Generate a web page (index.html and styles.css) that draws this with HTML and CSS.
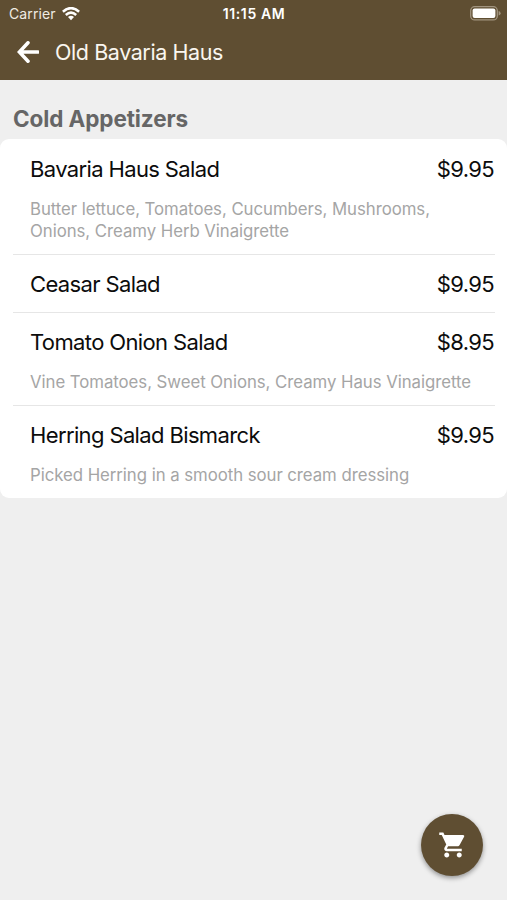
FILE: index.html
```html
<!DOCTYPE html>
<html lang="en">
<head>
<meta charset="utf-8">
<title>Old Bavaria Haus</title>
<link rel="stylesheet" href="styles.css">
</head>
<body>
<header class="header">
  <div class="status">
    <div class="carrier"><span>Carrier</span>
      <svg class="wifi" width="18" height="14" viewBox="0 0 18 14"><g fill="none" stroke="#fff" stroke-width="2.5"><path d="M.9 4.7Q9-2.5 17.1 4.7"/><path d="M3.8 8Q9 3.3 14.2 8"/></g><path fill="#fff" d="M6 10.1Q9 7.5 12 10.1L9 13.2Z"/></svg>
    </div>
    <time class="time">11:15 AM</time>
    <svg class="battery" width="31" height="15" viewBox="0 0 31 15"><rect x=".7" y=".7" width="26.6" height="13.2" rx="4" fill="none" stroke="#a1947f" stroke-width="1.3"/><rect x="2.6" y="2.6" width="22.8" height="9.4" rx="2" fill="#fff"/><path d="M28.6 5Q30.6 5.6 30.6 7.3T28.6 9.6Z" fill="#a1947f"/></svg>
  </div>
  <nav class="nav">
    <svg class="back" width="22" height="22" viewBox="0 0 22 22"><path d="M11 1.8 2.4 11l8.6 9.2M2.8 11H21" fill="none" stroke="#fff" stroke-width="3.5" stroke-linecap="round"/></svg>
    <h1 class="title">Old Bavaria Haus</h1>
  </nav>
</header>
<main class="menu">
  <h2 class="section">Cold Appetizers</h2>
  <ul class="card">
    <li class="item">
      <div class="line"><span class="name">Bavaria Haus Salad</span><span class="price">$9.95</span></div>
      <p class="desc">Butter lettuce, Tomatoes, Cucumbers, Mushrooms,<br>Onions, Creamy Herb Vinaigrette</p>
    </li>
    <li class="item plain">
      <div class="line"><span class="name">Ceasar Salad</span><span class="price">$9.95</span></div>
    </li>
    <li class="item">
      <div class="line"><span class="name">Tomato Onion Salad</span><span class="price">$8.95</span></div>
      <p class="desc">Vine Tomatoes, Sweet Onions, Creamy Haus Vinaigrette</p>
    </li>
    <li class="item">
      <div class="line"><span class="name">Herring Salad Bismarck</span><span class="price">$9.95</span></div>
      <p class="desc">Picked Herring in a smooth sour cream dressing</p>
    </li>
  </ul>
</main>
<button class="cart" aria-label="Cart">
  <svg width="30" height="30" viewBox="0 0 24 24" fill="#fff"><path d="M7 18c-1.1 0-1.99.9-1.99 2S5.9 22 7 22s2-.9 2-2-.9-2-2-2zM1 2v2h2l3.6 7.59-1.35 2.45c-.16.28-.25.61-.25.96 0 1.1.9 2 2 2h12v-2H7.42c-.14 0-.25-.11-.25-.25l.03-.12.9-1.63h7.45c.75 0 1.41-.41 1.75-1.03l3.58-6.49A1 1 0 0 0 20 4H5.21l-.94-2H1zm16 16c-1.1 0-1.99.9-1.99 2s.89 2 1.99 2 2-.9 2-2-.9-2-2-2z"/></svg>
</button>
</body>
</html>
```
FILE: styles.css
```css
* { box-sizing: border-box; margin: 0; padding: 0; }
body {
  min-height: 900px;
  background: #efefef;
  font-family: Inter, "Liberation Sans", sans-serif;
  color: #0c0c0c;
}
.header { height: 80px; background: #5f4e32; color: #fff; }
.status {
  display: grid;
  grid-template-columns: 1fr auto 1fr;
  align-items: center;
  height: 27px;
  padding: 0 6px 0 9px;
  font-size: 14px;
  line-height: 18px;
}
.carrier { display: flex; align-items: center; gap: 6px; letter-spacing: 0.1px; color: #f0ebe3; }
.time { margin-left: -2px; font-weight: 600; font-size: 14px; letter-spacing: 0.6px; }
.battery { justify-self: end; }
.nav { display: flex; align-items: center; height: 50px; padding-left: 17px; gap: 16px; }
.title { font-size: 21.5px; font-weight: 400; letter-spacing: -0.42px; line-height: 28px; color: #faf6ef; }
.section {
  height: 59px;
  padding: 25px 13px 0;
  font-size: 22.5px;
  font-weight: 700;
  line-height: 28px;
  letter-spacing: -0.1px;
  color: #666;
}
.card { list-style: none; height: 359px; background: #fff; border-radius: 9px; padding: 0 12px 0 13px; }
.item { padding-left: 17px; }
.item + .item { border-top: 1px solid #e6e6e6; }
.line { display: flex; justify-content: space-between; height: 58px; padding-top: 14px; font-size: 22px; line-height: 30px; letter-spacing: -0.63px; }
.item:first-child .line { height: 59px; padding-top: 15px; }
.plain .line { height: 57px; }
.price { margin-right: 1px; }
.desc { padding-bottom: 12px; font-size: 16.8px; line-height: 22px; letter-spacing: -0.05px; color: #a5a5a5; white-space: nowrap; }
.cart {
  position: fixed;
  left: 421px;
  top: 814px;
  display: grid;
  place-items: center;
  width: 62px;
  height: 62px;
  padding-left: 2px;
  border: 0;
  border-radius: 50%;
  background: #5f4e32;
  box-shadow: 0 2px 5px rgba(0, 0, 0, .4);
}
```
